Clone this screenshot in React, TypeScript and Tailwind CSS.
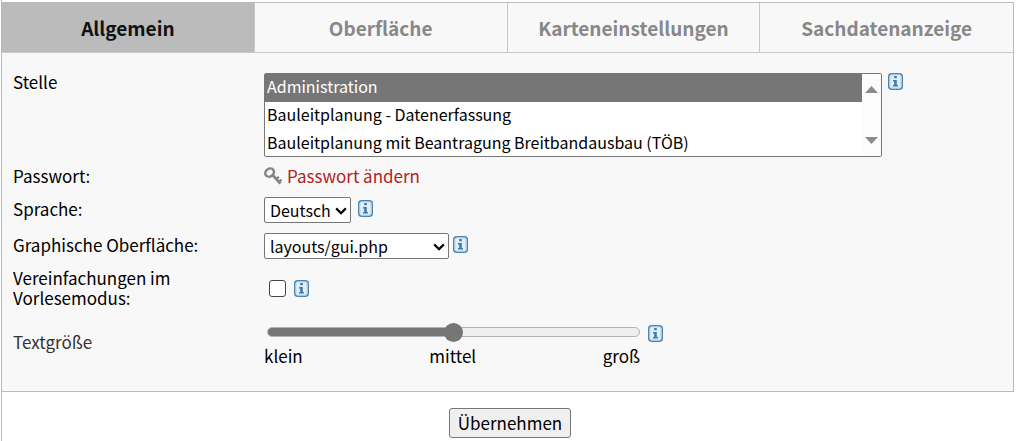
import { useState } from 'react';

const tabs = ['Allgemein', 'Oberfläche', 'Karteneinstellungen', 'Sachdatenanzeige'];

const stellen = [
  'Administration',
  'Bauleitplanung - Datenerfassung',
  'Bauleitplanung mit Beantragung Breitbandausbau (TÖB)',
];

function InfoButton({ label }: { label: string }) {
  return (
    <button type="button" aria-label={label} className="block shrink-0">
      <svg width="15" height="17" viewBox="0 0 15 17" aria-hidden="true">
        <rect x="0.75" y="0.75" width="13.5" height="15.5" rx="3" fill="#e4eef6" stroke="#4a84b0" strokeWidth="1.5" />
        <rect x="2" y="2" width="11" height="13" rx="1.5" fill="none" stroke="#b9d5ea" strokeWidth="1" />
        <path d="M6.2 3h2.6v2.3H6.2zM5 7h3.8v5H10v1.4H5V12h1.2V8.4H5z" fill="#3f7ca8" />
      </svg>
    </button>
  );
}

function KeyIcon() {
  return (
    <svg width="18" height="18" viewBox="0 0 18 18" fill="none" stroke="#858585" aria-hidden="true">
      <ellipse cx="5.6" cy="5.6" rx="4.6" ry="3.8" strokeWidth="2.4" transform="rotate(-35 5.6 5.6)" />
      <path d="M8.4 7.8l8 8.8" strokeWidth="2.8" />
      <path d="M12 12.4l2.8-2.6M14.8 15.2l2.8-2.6" strokeWidth="2.2" />
    </svg>
  );
}

function DropDown({ id, value, className }: { id: string; value: string; className: string }) {
  return (
    <span className="relative inline-flex">
      <select
        id={id}
        className={`h-[26px] appearance-none rounded-xs border border-[#767676] bg-white pl-[5px] text-[16px] leading-6 text-black ${className}`}
      >
        <option>{value}</option>
      </select>
      <svg
        width="12"
        height="8"
        viewBox="0 0 12 8"
        className="pointer-events-none absolute top-[10px] right-1"
        aria-hidden="true"
      >
        <path d="M1.2 1.4L6 6.2l4.8-4.8" fill="none" stroke="#000" strokeWidth="2.2" />
      </svg>
    </span>
  );
}

export default function App() {
  const [activeTab, setActiveTab] = useState('Allgemein');
  const [textSize, setTextSize] = useState(50);

  return (
    <div className="ml-px border-l border-[#bbbbbb] bg-white pt-[2px] pr-1 font-['Noto_Sans_CJK_SC','Noto_Sans',sans-serif] text-[17px] leading-5 text-black">
      <div className="border-t border-r border-b border-[#bbbbbb] bg-[#f8f8f8]">
        {/* Tabs */}
        <div role="tablist" className="grid grid-cols-4 divide-x divide-[#c8c8c8] border-b border-[#c8c8c8]">
          {tabs.map((tab) => (
            <button
              key={tab}
              type="button"
              role="tab"
              aria-selected={tab === activeTab}
              onClick={() => setActiveTab(tab)}
              className={`h-[49px] text-[19px] font-bold ${
                tab === activeTab ? 'bg-[#bbbbbb] text-[#111111]' : 'text-[#888888]'
              }`}
            >
              {tab}
            </button>
          ))}
        </div>

        {/* Settings */}
        <div className="grid grid-cols-[251px_1fr] pt-[19px] pr-5 pb-[25px] pl-[11px]">
          <label htmlFor="stelle">Stelle</label>
          <div className="flex items-start gap-1.5 pt-px">
            <div className="flex h-[84px] w-[618px] overflow-hidden rounded-xs border border-[#767676] bg-white">
              <select
                id="stelle"
                size={3}
                defaultValue={stellen[0]}
                className="min-w-0 flex-1 overflow-hidden text-[16px] text-black [scrollbar-width:none]"
              >
                {stellen.map((name) => (
                  <option
                    key={name}
                    value={name}
                    className="h-7 min-h-0 px-[2px] py-0 leading-7 checked:bg-[#767676] checked:bg-linear-to-r checked:from-[#767676] checked:to-[#767676] checked:text-white"
                  >
                    {name}
                  </option>
                ))}
              </select>
              <div className="flex w-[19px] flex-col items-center justify-between bg-[#fcfcfc] py-3" aria-hidden="true">
                <svg width="13" height="7" viewBox="0 0 13 7">
                  <path d="M6.5 0L13 7H0z" fill="#8b8b8b" />
                </svg>
                <svg width="13" height="7" viewBox="0 0 13 7">
                  <path d="M6.5 7L13 0H0z" fill="#8b8b8b" />
                </svg>
              </div>
            </div>
            <InfoButton label="Hilfe zur Stelle" />
          </div>

          <span className="pt-[9px]">Passwort:</span>
          <div className="pt-[9px]">
            <a href="#passwort" className="flex w-fit items-center gap-[5px] text-[#b22222]">
              <KeyIcon />
              Passwort ändern
            </a>
          </div>

          <label htmlFor="sprache" className="pt-[13px]">Sprache:</label>
          <div className="flex items-start gap-[7px] pt-[11px]">
            <DropDown id="sprache" value="Deutsch" className="w-[87px]" />
            <span className="pt-[3px]">
              <InfoButton label="Hilfe zur Sprache" />
            </span>
          </div>

          <label htmlFor="gui" className="pt-3">Graphische Oberfläche:</label>
          <div className="flex items-start gap-1 pt-[10px]">
            <DropDown id="gui" value="layouts/gui.php" className="w-[185px]" />
            <span className="pt-[3px]">
              <InfoButton label="Hilfe zur Oberfläche" />
            </span>
          </div>

          <label htmlFor="vorlesen" className="pt-[9px] pr-16">
            Vereinfachungen im Vorlesemodus:
          </label>
          <div className="flex items-center gap-2 pt-[10px] pl-[5px]">
            <input
              id="vorlesen"
              type="checkbox"
              className="size-[17px] appearance-none rounded-[3px] border border-[#444444] bg-white checked:bg-[#767676]"
            />
            <InfoButton label="Hilfe zum Vorlesemodus" />
          </div>

          <label htmlFor="textsize" className="pt-6 text-[#333333]">Textgröße</label>
          <div className="flex items-start gap-2 pt-[14px]">
            <div className="w-[376px]">
              <input
                id="textsize"
                type="range"
                min={0}
                max={100}
                value={textSize}
                onChange={(e) => setTextSize(Number(e.target.value))}
                style={{
                  backgroundImage: `linear-gradient(to right, #767676 ${textSize}%, transparent ${textSize}%)`,
                }}
                className="mt-[5px] mb-[9px] ml-[3px] block h-[10px] w-[373px] appearance-none rounded-full border border-[#b2b2b2] bg-[#efefef] bg-origin-border [&::-webkit-slider-thumb]:size-[19px] [&::-webkit-slider-thumb]:appearance-none [&::-webkit-slider-thumb]:rounded-full [&::-webkit-slider-thumb]:bg-[#767676]"
              />
              <div className="flex justify-between">
                <span>klein</span>
                <span>mittel</span>
                <span>groß</span>
              </div>
            </div>
            <span className="pt-[3px]">
              <InfoButton label="Hilfe zur Textgröße" />
            </span>
          </div>
        </div>
      </div>

      <div className="flex justify-center pt-4 pb-[3px] pl-1">
        <button type="submit" className="h-[30px] rounded-[3px] border border-[#767676] bg-[#efefef] px-2 text-[17px]">
          Übernehmen
        </button>
      </div>
    </div>
  );
}
